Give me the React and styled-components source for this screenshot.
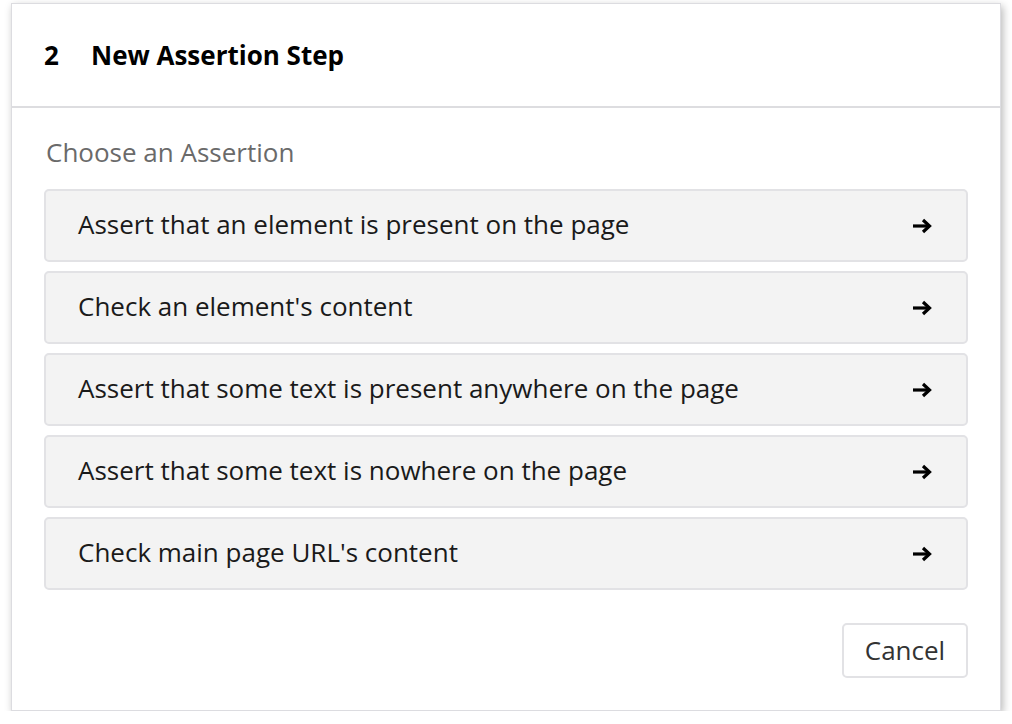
import React from "react";
import styled, { createGlobalStyle } from "styled-components";

const options = [
  "Assert that an element is present on the page",
  "Check an element's content",
  "Assert that some text is present anywhere on the page",
  "Assert that some text is nowhere on the page",
  "Check main page URL's content",
];

const Arrow = () => (
  <svg width="20" height="16" viewBox="0 0 20 16" fill="none">
    <path d="M1 8h16" stroke="#000" strokeWidth="3.2" />
    <path d="M11 2l6.5 6L11 14" stroke="#000" strokeWidth="3.2" />
  </svg>
);

const App = () => {
  return (
    <>
      <GlobalStyle />
      <Page>
        <Card>
          <Header>
            <StepNo>2</StepNo>
            <Title>New Assertion Step</Title>
          </Header>
          <Body>
            <Label>Choose an Assertion</Label>
            <List>
              {options.map((text) => (
                <Option key={text}>
                  <span>{text}</span>
                  <Arrow />
                </Option>
              ))}
            </List>
            <Footer>
              <BtnCancel>Cancel</BtnCancel>
            </Footer>
          </Body>
        </Card>
      </Page>
    </>
  );
};

const GlobalStyle = createGlobalStyle`
  body {
    margin: 0;
    background: #fff;
    font-family: "Open Sans", "Noto Sans", sans-serif;
  }
`;

const Page = styled.div`
  padding: 3px 0 0 11px;
  width: 990px;
`;

const Card = styled.div`
  background: #fff;
  border: 1px solid #dcdce0;
  box-shadow: 2px 3px 8px rgba(0, 0, 0, 0.28);
  height: 708px;
  box-sizing: border-box;
  display: flex;
  flex-direction: column;
`;

const Header = styled.div`
  height: 104px;
  box-sizing: border-box;
  display: flex;
  align-items: center;
  padding: 0 0 0 32px;
  border-bottom: 2px solid #dddde0;
  font-weight: 700;
  font-size: 26px;
  color: #000;
`;

const StepNo = styled.span`
  width: 47px;
`;

const Title = styled.span``;

const Body = styled.div`
  padding: 26px 32px 0;
`;

const Label = styled.div`
  font-size: 26px;
  color: #6a6a6a;
  padding-left: 2px;
  line-height: 36px;
`;

const List = styled.div`
  margin-top: 19px;
  display: flex;
  flex-direction: column;
  gap: 9px;
`;

const Option = styled.div`
  height: 73px;
  box-sizing: border-box;
  background: #f3f3f3;
  border: 2px solid #e2e2e5;
  border-radius: 5px;
  display: flex;
  align-items: center;
  justify-content: space-between;
  padding: 0 34px 3px 32px;
  font-size: 26px;
  color: #1a1a1a;

  svg {
    margin-top: 3px;
  }
`;

const Footer = styled.div`
  display: flex;
  justify-content: flex-end;
  margin-top: 33px;
`;

const BtnCancel = styled.button`
  width: 126px;
  height: 55px;
  background: #fff;
  border: 2px solid #e2e2e5;
  border-radius: 5px;
  font-family: inherit;
  font-size: 26px;
  color: #333;
  padding-bottom: 2px;
`;

export default App;
